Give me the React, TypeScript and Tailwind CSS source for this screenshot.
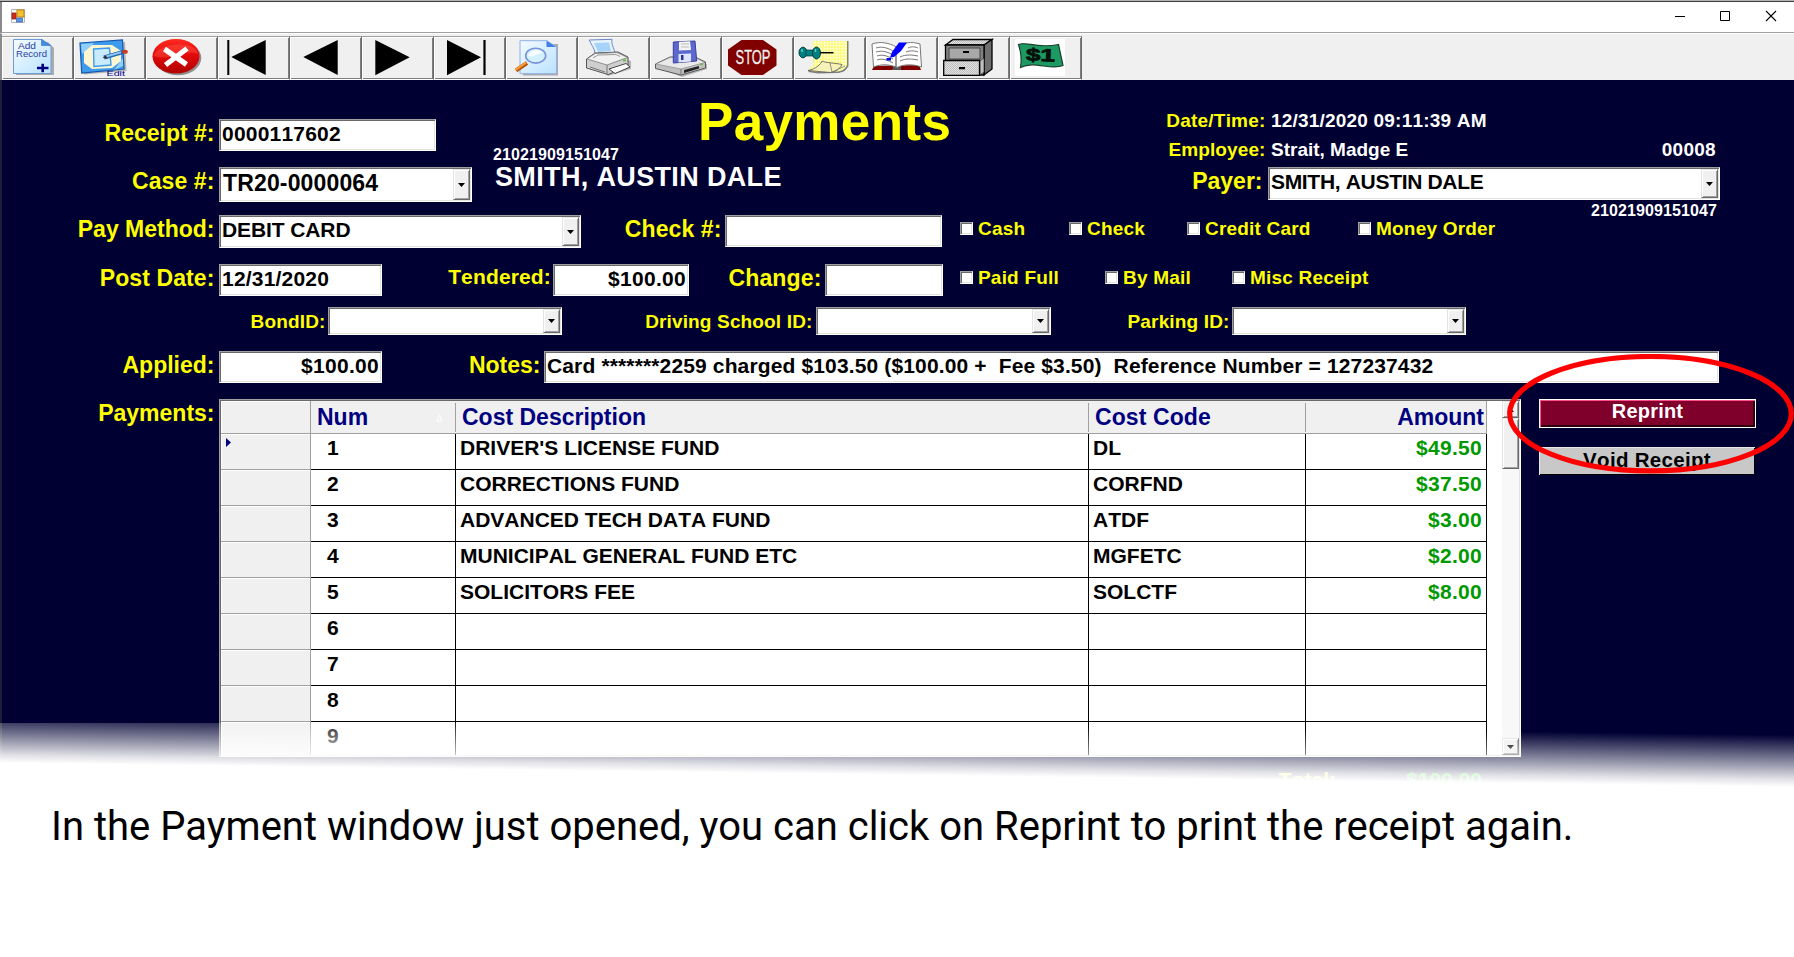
import React from "react";

const bevelIn =
  "border border-t-[#a0a0a0] border-l-[#a0a0a0] border-b-white border-r-white shadow-[inset_1px_1px_0_#696969,inset_-1px_-1px_0_#e3e3e3]";
const bevelOut =
  "border border-t-[#e3e3e3] border-l-[#e3e3e3] border-b-[#696969] border-r-[#696969] shadow-[inset_1px_1px_0_#ffffff,inset_-1px_-1px_0_#a0a0a0]";

function AddIcon() {
  return (
    <>
      <defs>
        <linearGradient id="doc" x1="0" y1="0" x2="1" y2="1">
          <stop offset="0" stopColor="#f4fbff" />
          <stop offset="1" stopColor="#b9e2ff" />
        </linearGradient>
      </defs>
      <path d="M14 6H46L52 12V39H14Z" fill="#9a9a9a" opacity=".8" />
      <path d="M11.5 3.5H40L49 10V37.5H11.5Z" fill="url(#doc)" stroke="#6f9ad8" strokeWidth="1" />
      <path d="M39.5 3.5V9.5H48.5Z" fill="#3f8fe6" stroke="#2f6fc4" strokeWidth=".6" />
      <text x="16" y="13" fontSize="8.5" textLength="18" lengthAdjust="spacingAndGlyphs" fill="#2d3fa0">Add</text>
      <text x="14" y="21" fontSize="8.5" textLength="31" lengthAdjust="spacingAndGlyphs" fill="#2d3fa0">Record</text>
      <path d="M35 32H46.500M40.700 27.700V36.300" stroke="#000080" strokeWidth="2.600" />
    </>
  );
}

function EditIcon() {
  return (
    <>
      <path d="M9 9L51 6L52.500 35L10 38.500Z" fill="#9a9a9a" opacity=".7" />
      <path d="M6 7L48.500 4L50 33L7.700 37Z" fill="#3c9bea" stroke="#1557b0" strokeWidth="1.200" />
      <path d="M7 8L20 7L8 18ZM49 30L40 34L49 22Z" fill="#8fd0ff" />
      <path d="M18 9H38L47 15V25L38 32L18 33L10 27V16Z" fill="#fdf6d2" />
      <path d="M19.500 13L35.500 12L37 29L20 30.500Z" fill="#c9ebff" stroke="#3c9bea" strokeWidth="1.400" />
      <path d="M30 21.500L49 16" stroke="#2463ae" strokeWidth="4" />
      <path d="M32 20.500L47 16.200" stroke="#8cc7f3" strokeWidth="2" />
      <path d="M28.500 21.500L32 19.500L33.500 23Z" fill="#333" />
      <ellipse cx="51" cy="15.700" rx="2.800" ry="2" fill="#d3371f" />
      <text x="32.500" y="39.500" fontSize="8" textLength="18.500" lengthAdjust="spacingAndGlyphs" fill="#000080">Edit</text>
    </>
  );
}

function CancelIcon() {
  return (
    <>
      <defs>
        <linearGradient id="red" x1="0" y1="0" x2="0" y2="1">
          <stop offset="0" stopColor="#ff2a20" />
          <stop offset=".45" stopColor="#e30b0b" />
          <stop offset="1" stopColor="#b00000" />
        </linearGradient>
      </defs>
      <ellipse cx="32" cy="22" rx="23.300" ry="17.300" fill="#777" opacity=".8" />
      <ellipse cx="30" cy="20.300" rx="23.500" ry="17.300" fill="url(#red)" />
      <path d="M8 20C10 7 50 3 52 18C40 12 26 26 8 20Z" fill="#ff5a4a" opacity=".4" />
      <path d="M18.500 13L40.500 28.500M41 12.500L19.500 29" stroke="#fff" strokeWidth="5.200" />
    </>
  );
}

function FirstIcon() {
  return <path d="M9.300 4H11.300V39H9.300ZM13.300 21L47.700 4V39Z" fill="#000" />;
}
function PrevIcon() {
  return <path d="M13.300 21L47.700 4V39Z" fill="#000" />;
}
function NextIcon() {
  return <path d="M13.300 4L47.700 21.300L13.300 39.300Z" fill="#000" />;
}
function LastIcon() {
  return <path d="M13 4L47 21.300L13 39.300ZM49.400 4H51.600V39H49.400Z" fill="#000" />;
}

function SearchIcon() {
  return (
    <>
      <path d="M17 8H52V39.500H17Z" fill="#9a9a9a" opacity=".8" />
      <path d="M14 4.700H41L50.500 11V37.700H14Z" fill="url(#doc)" stroke="#8fb0e8" strokeWidth="1" />
      <path d="M40.500 4.700V11H50Z" fill="#3f7fe6" />
      <path d="M10 34.500L21 27" stroke="#b8560f" strokeWidth="4" />
      <path d="M9.500 34L20 26.500" stroke="#ffa030" strokeWidth="2" />
      <ellipse cx="29.700" cy="19.700" rx="10" ry="7.400" fill="#d3f0ff" stroke="#7b93d6" strokeWidth="1.600" />
      <path d="M22 20C24 13 33 12 37 17C32 17 27 22 22 20Z" fill="#fff" opacity=".8" />
    </>
  );
}

function PrinterIcon() {
  return (
    <>
      <path d="M11 26L30 40L53 33V25L40 20Z" fill="#8d8d8d" opacity=".6" />
      <path d="M11.300 4L34 3.300C33 8 36 12 37 17L17 18C17 12 13 9 11.300 4Z" fill="#e7f4ff" stroke="#6a88c8" strokeWidth="1" />
      <path d="M16 7L31 6.500L33 15L20 16Z" fill="#a5d3fa" />
      <path d="M8.500 23L17 17L40 16L50 21V31L30 38.500L8.500 32Z" fill="#cfcfcf" stroke="#555" strokeWidth="1" />
      <path d="M9 23L17 17.500L39 16.500L49.500 21.500L29 29Z" fill="#f1f1f1" stroke="#7a7a7a" strokeWidth=".8" />
      <path d="M15 22L20 19L38 18.500L42 20.500" stroke="#999" strokeWidth="1" fill="none" />
      <path d="M29 29V38" stroke="#777" strokeWidth="1" />
      <path d="M31 33L48 27.500L52 31L37 37.500Z" fill="#fff" stroke="#444" strokeWidth="1" />
      <path d="M12 31L27 36" stroke="#777" strokeWidth="1" />
      <rect x="45" y="23.500" width="3" height="1.800" fill="#5bc236" />
    </>
  );
}

function SaveIcon() {
  return (
    <>
      <path d="M8 32L32 41L57 33V28Z" fill="#8d8d8d" opacity=".6" />
      <path d="M5.500 28L20 21H45L55.500 26V32L31 39L5.500 32.500Z" fill="#bfbfbf" stroke="#5a5a5a" strokeWidth="1" />
      <path d="M6 28L20 21.500H45L55 26.500L31 33Z" fill="#e9e9e9" stroke="#8a8a8a" strokeWidth=".7" />
      <path d="M31 33V38.500" stroke="#777" />
      <path d="M34 34L49 30V32.500L34 37Z" fill="#222" />
      <path d="M23.300 6L45 5L46.700 25L23.300 27Z" fill="#5c68cf" stroke="#3a3f99" strokeWidth="1" />
      <path d="M29 5.800L40 5.300L41 14L29 14.500Z" fill="#f4f4f4" />
      <path d="M31 8H39M31 11H39" stroke="#bbb" strokeWidth="1" />
      <path d="M28.500 18L41 17.500V25.500L28.500 26.500Z" fill="#dce4ff" />
      <rect x="31" y="19" width="2.500" height="5" fill="#2933a0" />
      <rect x="50" y="27.500" width="2.500" height="1.600" fill="#5bc236" />
    </>
  );
}

function StopIcon() {
  return (
    <>
      <path d="M19.500 4H41L54.500 13.500V29.500L41 39H19.500L6 29.500V13.500Z" fill="#800000" />
      <text x="13.500" y="28.300" fontSize="19.500" textLength="35" lengthAdjust="spacingAndGlyphs" fill="#efefef" stroke="#efefef" strokeWidth=".3">
        STOP
      </text>
    </>
  );
}

function NoteIcon() {
  return (
    <>
      <defs>
        <pattern id="dots" width="3" height="3" patternUnits="userSpaceOnUse">
          <rect width="3" height="3" fill="#ffff98" />
          <rect width="1" height="1.500" fill="#fff" />
          <rect x="1.500" y="1.500" width="1" height="1" fill="#f7ee4a" />
        </pattern>
      </defs>
      <path d="M19 5H54.500V30C52 35 48 37 43 37L24 37.500L14 36C19 33 20 27 19 22Z" fill="#808080" />
      <path d="M19 5H53V29C51 34 46 35.500 42 35.500L25 36L13 34.500C18 32 20 27 19 22Z" fill="url(#dots)" />
      <path d="M14 34.500C22 33 27 28 28 25C32 27 42 27 48 28.500C46 33 41 36 36 36.500Z" fill="#f6f2b8" stroke="#555" strokeWidth=".8" />
      <path d="M36 27L38 36M38 36L51 30" stroke="#777" strokeWidth=".8" fill="none" />
      <path d="M25 16.700H39.500" stroke="#000" strokeWidth="1.500" />
      <ellipse cx="9" cy="16.500" rx="4" ry="5.300" fill="#008080" stroke="#003c3c" strokeWidth="1" />
      <rect x="12" y="14" width="9" height="6" fill="#008080" stroke="#003c3c" strokeWidth=".7" />
      <ellipse cx="22.500" cy="17" rx="4" ry="6" fill="#008080" stroke="#003c3c" strokeWidth="1" />
      <path d="M8 13V16M21.500 13V16" stroke="#5fd0d0" strokeWidth="1.400" />
    </>
  );
}

function BookIcon() {
  return (
    <>
      <path d="M8 30L6 34H26L30 32L34 34H55L53 29Z" fill="#800000" />
      <path d="M27 30H35V34H27Z" fill="#555" />
      <path d="M6 8C14 5 24 7 30 11C36 7 46 5 54 8L55.500 31C47 28 38 28 31 31.500C23 28 15 28 7.500 31Z" fill="#fff" stroke="#777" strokeWidth="1" />
      <path
        d="M10 12C16 10 22 12 27 15M10 16C16 14 22 16 27 19M11 20C16 18 22 20 27 23M11 24C16 22 22 24 27 27M42 12C46 10 50 11 52 12M40 16C45 14 50 15 52 16M34 21C40 18 47 19 52 20M34 25C40 22 47 23 52 24"
        stroke="#777"
        strokeWidth="1"
        fill="none"
      />
      <path d="M30 11V31" stroke="#555" strokeWidth="1.200" />
      <path d="M33 6.500H41L35 15L28 21L24 21.500L26 16Z" fill="#0000ff" />
      <path d="M20.500 22H25V24.500H20.500Z" fill="#0000ff" />
    </>
  );
}

function CabinetIcon() {
  return (
    <>
      <defs>
        <pattern id="mesh" width="2" height="2" patternUnits="userSpaceOnUse">
          <rect width="2" height="2" fill="#e2e2e2" />
          <rect width="1" height="1" fill="#bdbdbd" />
          <rect x="1" y="1" width="1" height="1" fill="#bdbdbd" />
        </pattern>
      </defs>
      <path d="M7.500 9L15 3.500H54L46 9Z" fill="url(#mesh)" stroke="#000" strokeWidth="1.300" />
      <path d="M46 9L54 3.500V33L46 39Z" fill="#6e6e6e" stroke="#000" strokeWidth="1.300" />
      <path d="M7.500 9H46V39H7.500Z" fill="#808080" stroke="#000" strokeWidth="1.300" />
      <path d="M11 12H42V23H11Z" fill="#a8a8a8" stroke="#444" strokeWidth="1" />
      <path d="M42 25L46 22V36L42 39Z" fill="#c0c0c0" stroke="#333" strokeWidth=".7" />
      <path d="M5.700 24.500H41.500V39.300H5.700Z" fill="url(#mesh)" stroke="#000" strokeWidth="1.300" />
      <path d="M25 15H31V17H25ZM21 31H27V33.300H21Z" fill="#000" />
    </>
  );
}

function MoneyIcon() {
  return (
    <>
      <rect x="5" y="3" width="50" height="37" fill="#fff" />
      <path d="M8.500 8.500C16 5 26 13 48.500 8.500L53 29.500C40 35 25 24 10.500 31.500C12 23 11 16 8.500 8.500Z" fill="#1d9a62" stroke="#163f2c" strokeWidth="1.200" />
      <text x="16" y="25" fontSize="17.500" fontWeight="bold" fill="#04120b" stroke="#04120b" strokeWidth=".8" textLength="29" lengthAdjust="spacingAndGlyphs" transform="rotate(2 30 20)">
        $1
      </text>
    </>
  );
}

const tools = [
  AddIcon, EditIcon, CancelIcon, FirstIcon, PrevIcon, NextIcon, LastIcon, SearchIcon,
  PrinterIcon, SaveIcon, StopIcon, NoteIcon, BookIcon, CabinetIcon, MoneyIcon,
];

function Label({ className, children }: { className: string; children: React.ReactNode }) {
  return <div className={`shrink-0 whitespace-nowrap text-right text-[#ffff00] ${className}`}>{children}</div>;
}

const big = "mt-px pr-[1.5px] text-[23px] leading-[26px]";
const small = "mt-[4px] pr-[1.5px] text-[19px] leading-[21px] tracking-[0.15px]";

function Arrow({ up = false }: { up?: boolean }) {
  return (
    <svg width="7" height="4" viewBox="0 0 7 4" className="block">
      <path d={up ? "M0 4H7L3.500 0Z" : "M0 0H7L3.500 4Z"} fill="#000" />
    </svg>
  );
}

function Field({ className, text, combo, textClass = "text-[21px] leading-[25px]" }: { className: string; text?: string; combo?: boolean; textClass?: string }) {
  return (
    <div className={`flex shrink-0 bg-white p-px text-black ${bevelIn} ${className}`}>
      <div className={`min-w-0 grow whitespace-pre px-px ${textClass}`}>{text}</div>
      {combo && (
        <div className={`flex w-[17px] shrink-0 items-center justify-center bg-[#f0f0f0] ${bevelOut}`}>
          <Arrow />
        </div>
      )}
    </div>
  );
}

function Check({ className, label }: { className: string; label: string }) {
  return (
    <div className={`flex shrink-0 ${className}`}>
      <div className={`mt-[7px] h-[13px] w-[13px] shrink-0 bg-white ${bevelIn}`} />
      <div className="ml-[5px] mt-[3px] whitespace-nowrap text-[19px] leading-[21px] tracking-[0.2px] text-[#ffff00]">{label}</div>
    </div>
  );
}

const rows = [
  ["1", "DRIVER'S LICENSE FUND", "DL", "$49.50"],
  ["2", "CORRECTIONS FUND", "CORFND", "$37.50"],
  ["3", "ADVANCED TECH DATA FUND", "ATDF", "$3.00"],
  ["4", "MUNICIPAL GENERAL FUND ETC", "MGFETC", "$2.00"],
  ["5", "SOLICITORS FEE", "SOLCTF", "$8.00"],
  ["6", "", "", ""],
  ["7", "", "", ""],
  ["8", "", "", ""],
  ["9", "", "", ""],
];

function Grid() {
  const head = "relative border-b border-b-[#a0a0a0] bg-[#f0f0f0] text-[23px] leading-[26px] pt-[3px] text-[#000080] whitespace-nowrap";
  const cell = "border-b border-b-black border-r border-r-black bg-white pt-px text-[21px] leading-[25px] whitespace-nowrap";
  return (
    <div className={`ml-[3px] flex h-[358px] w-[1302px] shrink-0 overflow-hidden bg-white p-px text-black ${bevelIn}`}>
      <div className="w-[1266px] shrink-0 overflow-hidden">
        <div className="flex h-[33px]">
          <div className="w-[90px] border-b border-r border-[#a0a0a0] bg-[#f0f0f0] shadow-[inset_1px_1px_0_#fff]" />
          <div className={`flex w-[145px] justify-between pl-[6px] ${head}`}>
            <span>Num</span>
            <svg width="7" height="8" viewBox="0 0 7 8" className="mr-[13px] mt-[10px]">
              <path d="M3.500 1L6 7H1Z" fill="none" stroke="#fff" />
            </svg>
            <span className="absolute bottom-px right-0 top-[2px] w-px bg-[#a0a0a0]" />
          </div>
          <div className={`w-[633px] pl-[6px] ${head}`}>
            Cost Description
            <span className="absolute bottom-px right-0 top-[2px] w-px bg-[#a0a0a0]" />
          </div>
          <div className={`w-[217px] pl-[6px] tracking-[0.1px] ${head}`}>
            Cost Code
            <span className="absolute bottom-px right-0 top-[2px] w-px bg-[#a0a0a0]" />
          </div>
          <div className={`w-[181px] border-r border-r-[#a0a0a0] pr-[2px] text-right ${head}`}>Amount</div>
        </div>
        {rows.map((r, i) => (
          <div key={r[0]} className="flex h-[36px]">
            <div className="w-[90px] border-b border-r border-[#a0a0a0] bg-[#f0f0f0] pl-[5px] pt-[4px] shadow-[inset_1px_1px_0_#fff]">
              {i === 0 && (
                <svg width="5" height="9" viewBox="0 0 5 9">
                  <path d="M0 0L5 4.500L0 9Z" fill="#000080" />
                </svg>
              )}
            </div>
            <div className={`w-[145px] pl-[16px] ${cell}`}>{r[0]}</div>
            <div className={`w-[633px] pl-[4px] ${cell}`}>{r[1]}</div>
            <div className={`w-[217px] pl-[4px] ${cell}`}>{r[2]}</div>
            <div className={`w-[181px] pr-[4px] text-right tracking-[0.3px] text-[#009900] ${cell}`}>{r[3]}</div>
          </div>
        ))}
      </div>
      <div className="ml-[15px] flex w-[17px] flex-col bg-[#f8f8f8]">
        <div className={`flex h-[17px] items-center justify-center bg-[#f0f0f0] ${bevelOut}`}>
          <Arrow up />
        </div>
        <div className={`h-[51px] bg-[#f0f0f0] ${bevelOut}`} />
        <div className="grow" />
        <div className={`flex h-[17px] items-center justify-center bg-[#f0f0f0] ${bevelOut}`}>
          <Arrow />
        </div>
      </div>
    </div>
  );
}

export default function App() {
  return (
    <div className="relative flex h-[957px] w-[1794px] flex-col overflow-hidden bg-white font-['Liberation_Sans',Arial,sans-serif]">
      <div className="h-px shrink-0 bg-[#b4b4b4]" />
      <div className="h-px shrink-0 bg-[#404040]" />
      <div className="flex h-[31px] shrink-0 justify-between border-b border-l-2 border-b-[#a0a0a0] border-l-[#8a8a8a] bg-white pl-[9px] pr-[17px]">
        <svg width="14" height="14" viewBox="0 0 14 14" className="mt-[7px]">
          <path d="M.5 .5H13.500V13.500H.5Z" fill="#f7f7f7" stroke="#b5b5b5" />
          <rect x="6" y="1" width="7" height="7" fill="#f8c12c" stroke="#b98511" />
          <rect x="1" y="4" width="4" height="6" fill="#cf2d1c" stroke="#8f170c" strokeWidth=".7" />
          <rect x="5.500" y="9" width="6" height="4" fill="#5a93e8" stroke="#3a68b3" strokeWidth=".7" />
        </svg>
        <svg width="102" height="12" viewBox="0 0 102 12" className="mt-[8px]" fill="none" stroke="#000">
          <path d="M0 6.500H10" />
          <path d="M45.500 1.500H54.500V10.500H45.500Z" />
          <path d="M91 1L101 11M101 1L91 11" strokeWidth="1.100" />
        </svg>
      </div>
      <div className="flex h-[47px] shrink-0 border-l-2 border-l-[#8a8a8a] border-t border-t-white bg-[#f0f0f0] pt-[2px]">
        {tools.map((Icon, i) => (
          <div
            key={i}
            className="h-[44px] w-[72px] shrink-0 border-b border-r border-t border-b-white border-r-[#696969] border-t-[#a0a0a0] shadow-[inset_1px_1px_0_#fff,inset_-1px_-1px_0_#7c7c7c]"
          >
            <svg width="71" height="42" viewBox="0 1 71 42" className="block">
              <Icon />
            </svg>
          </div>
        ))}
      </div>

      <div className="flex h-[714px] shrink-0 flex-col overflow-hidden bg-[#000033] font-bold [font-kerning:none] shadow-[inset_2px_0_0_#1c1c38]">
        <div className="flex h-[135px] shrink-0">
          <div className="w-[472px] shrink-0 pt-[39px]">
            <div className="flex h-[48px]">
              <Label className={`w-[216px] ${big}`}>Receipt #:</Label>
              <Field className="ml-[3px] h-[32px] w-[217px]" text="0000117602" textClass="text-[21px] leading-[25px] tracking-[0.2px]" />
            </div>
            <div className="flex h-[48px]">
              <Label className={`w-[216px] tracking-[0.1px] ${big}`}>Case #:</Label>
              <Field className="ml-[3px] h-[35px] w-[253px]" text="TR20-0000064" combo textClass="text-[23px] leading-[26px] pt-px pl-[2px] tracking-[0.15px]" />
            </div>
          </div>
          <div className="w-[560px] shrink-0 pl-[20px] text-white">
            <div className="ml-[206px] mt-[12px] h-[54px] text-[53px] leading-[59px] tracking-[0.35px] text-[#ffff00]">Payments</div>
            <div className="ml-px h-[16px] text-[16px] leading-[18px] tracking-[0.1px]">21021909151047</div>
            <div className="ml-[3px] text-[27px] leading-[30px] tracking-[0.35px]">SMITH, AUSTIN DALE</div>
          </div>
          <div className="w-[688px] shrink-0 pt-[30px] text-[19px] leading-[21px] text-white">
            <div className="flex h-[29px] tracking-[0.2px]">
              <Label className="w-[235px] pr-[1.5px]">Date/Time:</Label>
              <div className="ml-[4px]">12/31/2020 09:11:39 AM</div>
            </div>
            <div className="flex h-[28px] tracking-[0.1px]">
              <Label className="w-[235px] pr-[1.5px]">Employee:</Label>
              <div className="ml-[4px] grow tracking-[0px]">Strait, Madge E</div>
              <div className="mr-[4px] tracking-[0.3px]">00008</div>
            </div>
            <div className="flex h-[36px]">
              <Label className={`w-[232px] ${big}`}>Payer:</Label>
              <Field className="ml-[4px] h-[33px] w-[452px]" text="SMITH, AUSTIN DALE" combo textClass="text-[21px] leading-[25px] tracking-[-0.32px]" />
            </div>
            <div className="pr-[3px] text-right text-[16px] leading-[16px] tracking-[0.1px]">21021909151047</div>
          </div>
        </div>

        <div className="flex h-[49px] shrink-0">
          <Label className={`w-[216px] ${big}`}>Pay Method:</Label>
          <Field className="ml-[3px] h-[33px] w-[362px]" text="DEBIT CARD" combo textClass="text-[21px] leading-[25px] tracking-[-0.1px]" />
          <Label className={`w-[142px] tracking-[0.1px] ${big}`}>Check #:</Label>
          <Field className="ml-[2px] h-[32px] w-[217px]" />
          <Check className="ml-[18px] w-[109px]" label="Cash" />
          <Check className="w-[118px]" label="Check" />
          <Check className="w-[171px]" label="Credit Card" />
          <Check className="" label="Money Order" />
        </div>
        <div className="flex h-[43px] shrink-0">
          <Label className={`w-[216px] tracking-[0.1px] ${big}`}>Post Date:</Label>
          <Field className="ml-[3px] h-[32px] w-[163px]" text="12/31/2020" textClass="text-[21px] leading-[25px] tracking-[0.2px]" />
          <Label className="w-[170px] pr-px text-[21px] leading-[25px] tracking-[0.15px]">Tendered:</Label>
          <Field className="ml-px h-[32px] w-[136px]" text="$100.00" textClass="text-[21px] leading-[25px] text-right tracking-[0.3px]" />
          <Label className={`w-[134px] tracking-[0.15px] ${big}`}>Change:</Label>
          <Field className="ml-[2px] h-[32px] w-[118px]" />
          <Check className="ml-[17px] w-[145px]" label="Paid Full" />
          <Check className="w-[127px]" label="By Mail" />
          <Check className="" label="Misc Receipt" />
        </div>
        <div className="flex h-[44px] shrink-0">
          <Label className={`w-[327px] ${small}`}>BondID:</Label>
          <Field className="ml-px h-[28px] w-[234px]" combo />
          <Label className={`w-[252px] ${small}`}>Driving School ID:</Label>
          <Field className="ml-[2px] h-[28px] w-[235px]" combo />
          <Label className={`w-[180px] ${small}`}>Parking ID:</Label>
          <Field className="ml-px h-[28px] w-[234px]" combo />
        </div>
        <div className="flex h-[48px] shrink-0">
          <Label className={`w-[216px] ${big}`}>Applied:</Label>
          <Field className="ml-[3px] h-[32px] w-[163px]" text="$100.00" textClass="text-[21px] leading-[25px] text-right tracking-[0.3px]" />
          <Label className={`w-[160px] ${big}`}>Notes:</Label>
          <Field className="ml-[2px] h-[32px] w-[1175px]" text="Card *******2259 charged $103.50 ($100.00 +  Fee $3.50)  Reference Number = 127237432" textClass="text-[21px] leading-[25px] tracking-[0.14px]" />
        </div>
        <div className="flex shrink-0">
          <Label className={`w-[216px] ${big}`}>Payments:</Label>
          <Grid />
          <div className="ml-[18px] flex flex-col gap-[19px] text-center text-[20px] tracking-[0.2px]">
            <div className="h-[29px] w-[217px] border border-white bg-[#7f002a] text-white shadow-[inset_1px_1px_0_#ff4f8b,inset_-2px_-2px_0_#2a000e] leading-[23px]">Reprint</div>
            <div className="h-[28px] w-[216px] bg-[#c8c8c8] text-[20.5px] text-black shadow-[inset_1px_1px_0_#e8e8e8,inset_-1px_-1px_0_#000] leading-[25px] tracking-[0.3px]">Void Receipt</div>
          </div>
        </div>
        <div className="flex shrink-0 pt-[10px] text-[21px] leading-[25px]">
          <Label className="w-[1336px]">Total:</Label>
          <div className="w-[146px] text-right text-[#00dd00]">$100.00</div>
        </div>
      </div>

      <div className="absolute left-0 top-[723px] h-[234px] w-[1794px] bg-[linear-gradient(180.77deg,rgba(255,255,255,0)_12px,rgba(255,255,255,0.88)_56px,#fff_64px)]" />
      <svg width="287" height="120" viewBox="0 0 287 120" className="absolute left-[1507px] top-[354px]">
        <ellipse cx="143.500" cy="59.700" rx="140.800" ry="57.200" fill="none" stroke="#ff0000" strokeWidth="5.200" />
      </svg>
      <div className="relative -mt-[4px] whitespace-nowrap pl-[51px] pt-[13px] font-['Roboto',sans-serif] text-[40px] leading-[48px] text-black">
        In the Payment window just opened, you can click on Reprint to print the receipt again.
      </div>
    </div>
  );
}
